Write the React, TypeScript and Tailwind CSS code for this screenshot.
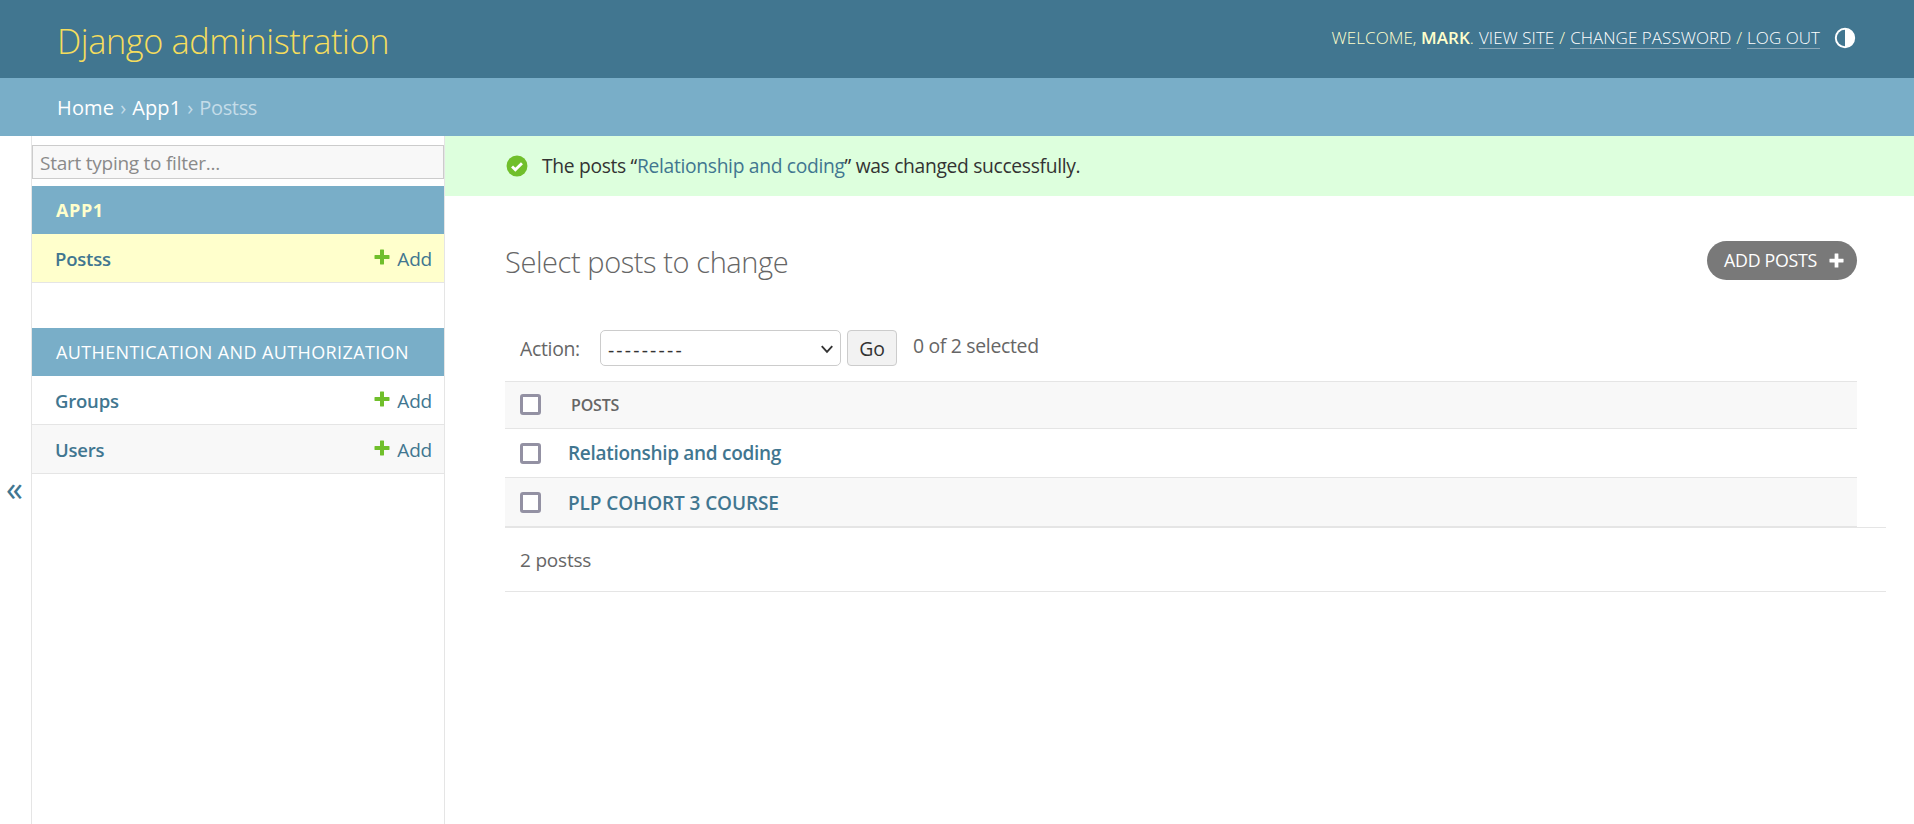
import React from "react";

function Plus({ className = "" }: { className?: string }) {
  return (
    <svg viewBox="0 0 16 16" className={className} aria-hidden="true">
      <path d="M6.4 0.5h3.2a.4.4 0 0 1 .4.4V6h5.1a.4.4 0 0 1 .4.4v3.2a.4.4 0 0 1-.4.4H10v5.1a.4.4 0 0 1-.4.4H6.4a.4.4 0 0 1-.4-.4V10H.9a.4.4 0 0 1-.4-.4V6.4a.4.4 0 0 1 .4-.4H6V.9a.4.4 0 0 1 .4-.4z" fill="currentColor" />
    </svg>
  );
}

function ModelRow({ name, bg, border }: { name: string; bg: string; border: string }) {
  return (
    <div className={`flex h-[49px] items-center justify-between pl-[23px] pr-3 pt-[1px] ${bg} ${border}`}>
      <a className="text-[18.5px] font-semibold tracking-[-0.2px] text-[#417690]">{name}</a>
      <span className="flex items-center gap-[7px] text-[19px] tracking-[-0.2px] text-[#417690]">
        <Plus className="mb-1 h-4 w-4 text-[#70bf2b]" />
        <span className="pt-[1px]">Add</span>
      </span>
    </div>
  );
}

function Check() {
  return <input type="checkbox" className="h-[21px] w-[21px] appearance-none rounded-[3px] border-[3px] border-[#9391a3] bg-white" />;
}

export default function App() {
  return (
    <div className="flex h-[824px] flex-col overflow-hidden bg-white font-['Open_Sans','Noto_Sans',sans-serif] text-[#333]">
      <header className="flex h-[78px] items-center justify-between bg-[#417690] pl-[57px] pr-[58px]">
        <h1 className="pt-[3px] text-[34.3px] font-light tracking-[-0.4px] text-[#f5dd5d]">Django administration</h1>
        <div className="flex items-center gap-[14px] pb-[2px]">
          <div className="flex items-center gap-[5px] text-[17px] font-light tracking-[0.05px] text-[#ffc] uppercase">
            <span>Welcome, <strong className="font-semibold">Mark</strong>.</span>
            <a className="border-b border-[#8aa7b8] leading-[20px] text-white">View site</a>
            <span>/</span>
            <a className="border-b border-[#8aa7b8] leading-[20px] text-white">Change password</a>
            <span>/</span>
            <a className="border-b border-[#8aa7b8] leading-[20px] text-white">Log out</a>
          </div>
          <svg viewBox="0 0 20 20" className="h-[22px] w-[22px]"><circle cx="10" cy="10" r="8.5" fill="#fff" stroke="#fff" strokeWidth="1.5" /><path d="M10 2.5a7.5 7.5 0 0 0 0 15z" fill="#417690" /></svg>
        </div>
      </header>
      <nav className="flex h-[58px] items-center gap-[6px] bg-[#79aec8] pl-[57px] pt-[2px] text-[20px] text-white">
        <a className="tracking-[0.15px]">Home</a><span className="text-[#c4dce8]">›</span><a className="tracking-[0.15px]">App1</a><span className="text-[#c4dce8]">›</span><span className="tracking-[-0.35px] text-[#c4dce8]">Postss</span>
      </nav>
      <div className="flex min-h-0 flex-1">
        <div className="flex w-[32px] items-center justify-center border-r border-[#e5e5e5] pr-[2px] pt-[16px] text-[34px] leading-none text-[#417690]">«</div>
        <aside className="w-[413px] shrink-0 border-r border-[#e5e5e5]">
          <div className="pt-[9px] pb-[7px]">
            <input placeholder="Start typing to filter..." className="block h-[34px] w-full border border-[#ccc] bg-[#f8f8f8] px-[7px] pt-[2px] text-[19px] tracking-[-0.25px] placeholder:text-[#8a8a8a]" />
          </div>
          <div className="flex h-[48px] items-center bg-[#79aec8] pl-[24px] text-[18px] font-bold tracking-[0.6px] text-[#ffc]">APP1</div>
          <ModelRow name="Postss" bg="bg-[#ffc]" border="border-b border-[#e5e5e5]" />
          <div className="h-[45px]" />
          <div className="flex h-[48px] items-center bg-[#79aec8] pl-[24px] text-[18px] tracking-[0.38px] text-white">AUTHENTICATION AND AUTHORIZATION</div>
          <ModelRow name="Groups" bg="bg-white" border="border-b border-[#e5e5e5]" />
          <ModelRow name="Users" bg="bg-[#f8f8f8]" border="border-b border-[#e5e5e5]" />
        </aside>
        <main className="min-w-0 flex-1">
          <div className="flex h-[60px] items-center gap-[14px] bg-[#dfd] pl-[61px] text-[19.25px] tracking-[-0.32px] text-[#333]">
            <svg viewBox="0 0 20 20" className="h-[22px] w-[22px]"><circle cx="10" cy="10" r="9.5" fill="#70bf2b" /><path d="M5.5 10.5l3 3 6-6" fill="none" stroke="#fff" strokeWidth="2.6" /></svg>
            <span className="pt-[1px]">The posts “<a className="text-[#417690]">Relationship and coding</a>” was changed successfully.</span>
          </div>
          <div className="pl-[60px] pr-[28px]">
            <div className="flex h-[134px] items-start justify-between pr-[29px]">
              <h2 className="pt-[46px] text-[29px] leading-[40px] font-light tracking-[-0.42px] text-[#666]">Select posts to change</h2>
              <a className="mt-[45px] flex h-[39px] w-[150px] items-center justify-center gap-[12px] rounded-[20px] bg-[#797979] pl-[4px] text-[17.8px] tracking-[-0.3px] text-white">
                ADD POSTS
                <Plus className="h-[15px] w-[15px]" />
              </a>
            </div>
            <div className="flex h-[51px] items-start pl-[15px] text-[19.4px] tracking-[-0.3px] text-[#666]">
              <span className="mr-[20px] leading-[38px]">Action:</span>
              <div className="relative mr-[6px] h-[36px] w-[241px] rounded-[5px] border border-[#ccc] bg-white pl-[7px] text-[#333]">
                <span className="leading-[37px] tracking-[2.2px]">---------</span>
                <svg viewBox="0 0 12 12" className="absolute right-[6px] top-[11px] h-[14px] w-[14px]"><path d="M1.5 3.5L6 8.5l4.5-5" fill="none" stroke="#333" strokeWidth="1.6" /></svg>
              </div>
              <button className="mr-[16px] h-[36px] w-[50px] rounded-[4px] border border-[#ccc] bg-[#f2f2f2] pt-[1px] text-[#333]">Go</button>
              <span className="leading-[32px]">0 of 2 selected</span>
            </div>
            <div className="mr-[29px]">
              <div className="flex h-[48px] items-center gap-[30px] border-y border-[#e5e5e5] bg-[#f8f8f8] pb-[1px] pl-[15px] text-[16px] font-semibold tracking-[-0.2px] text-[#666]">
                <Check />
                <span className="pt-[1px]">POSTS</span>
              </div>
              <div className="flex h-[49px] items-center gap-[27px] border-b border-[#e5e5e5] bg-white pl-[15px] text-[19px] font-semibold tracking-[-0.3px] text-[#417690]">
                <Check />
                <a className="pt-[1px]">Relationship and coding</a>
              </div>
              <div className="flex h-[49px] items-center gap-[27px] border-b border-[#e5e5e5] bg-[#f8f8f8] pl-[15px] text-[19px] font-semibold tracking-[-0.1px] text-[#417690]">
                <Check />
                <a className="pt-[2px]">PLP COHORT 3 COURSE</a>
              </div>
            </div>
            <div className="flex h-[65px] items-center border-y border-[#e5e5e5] pl-[15px] pt-[1px] text-[19px] tracking-[-0.2px] text-[#666]">2 postss</div>
          </div>
        </main>
      </div>
    </div>
  );
}
